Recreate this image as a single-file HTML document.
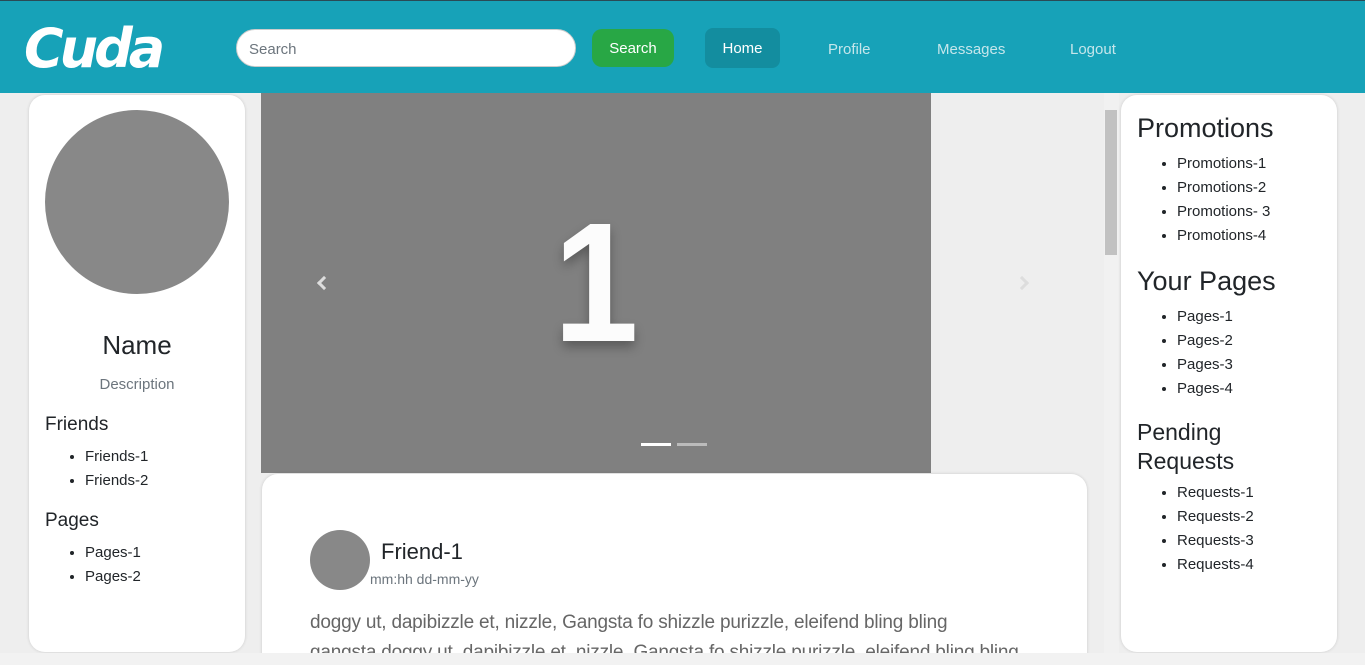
<!DOCTYPE html>
<html><head><style>
*{margin:0;padding:0;box-sizing:border-box}
html,body{width:1365px;height:665px;overflow:hidden}
body{background:#eeeeee;font-family:"Liberation Sans",sans-serif;color:#212529;position:relative}
.nav{position:absolute;left:0;top:0;width:1365px;height:93px;background:#17a2b8;border-top:1px solid #2a4a55}
.logo{position:absolute;left:24px;top:16px;font:italic 900 54px "DejaVu Sans",sans-serif;color:#fff;letter-spacing:-4px}
.search{position:absolute;left:236px;top:28px;width:340px;height:38px;background:#fff;border-radius:19px;border:1px solid #ccc;font-size:15px;color:#6c757d;padding:11px 12px}
.btn{position:absolute;left:592px;top:28px;width:82px;height:38px;background:#28a745;border-radius:10px;color:#fff;font-size:15px;text-align:center;line-height:40px}
.home{position:absolute;left:705px;top:27px;width:75px;height:40px;background:#138d9f;border-radius:8px;color:#fff;font-size:15px;text-align:center;line-height:42px}
.nl{position:absolute;top:40px;color:#c5e6eb;font-size:15px}
.card{position:absolute;background:#fff;border-radius:16px;box-shadow:0 0 3px rgba(0,0,0,.15)}
ul{padding-left:40px;font-size:15px;line-height:24px}
.car{position:absolute;left:261px;top:93px;width:670px;height:380px;background:#808080}
.big{position:absolute;left:0;width:670px;top:190px;text-align:center;color:#fcfcfc;font:bold 170px "Liberation Sans",sans-serif;text-shadow:0 6px 12px rgba(0,0,0,.3);line-height:0;transform:scaleX(.9)}
.bot{position:absolute;left:0;top:653px;width:1365px;height:12px;background:#f2f2f2;z-index:5}
</style></head><body>
<div class="nav">
<div class="logo">Cuda</div>
<div class="search">Search</div>
<div class="btn">Search</div>
<div class="home">Home</div>
<div class="nl" style="left:828px">Profile</div>
<div class="nl" style="left:937px">Messages</div>
<div class="nl" style="left:1070px">Logout</div>
</div>
<div class="card" style="left:29px;top:95px;width:216px;height:557px">
<div style="position:absolute;left:16px;top:15px;width:184px;height:184px;border-radius:50%;background:#888"></div>
<div style="position:absolute;top:235px;width:216px;text-align:center;font-size:26px">Name</div>
<div style="position:absolute;top:281px;width:216px;text-align:center;font-size:15px;color:#6c757d">Description</div>
<div style="position:absolute;left:16px;top:319px;font-size:19px">Friends</div>
<ul style="position:absolute;left:16px;top:350px"><li>Friends-1</li><li>Friends-2</li></ul>
<div style="position:absolute;left:16px;top:415px;font-size:19px">Pages</div>
<ul style="position:absolute;left:16px;top:446px"><li>Pages-1</li><li>Pages-2</li></ul>
</div>
<div class="car"><div class="big">1</div>
<div style="position:absolute;left:58px;top:185px;width:10px;height:10px;border-left:3px solid #ddd;border-bottom:3px solid #ddd;transform:rotate(45deg)"></div>
<div style="position:absolute;left:756px;top:185px;width:10px;height:10px;border-right:3px solid #ddd;border-top:3px solid #ddd;transform:rotate(45deg)"></div>
<div style="position:absolute;left:380px;top:350px;width:30px;height:3px;background:#fff"></div>
<div style="position:absolute;left:416px;top:350px;width:30px;height:3px;background:#bbb"></div>
</div>
<div class="card" style="left:262px;top:474px;width:825px;height:200px;overflow:hidden;border-radius:16px 16px 0 0">
<div style="position:absolute;left:48px;top:56px;width:60px;height:60px;border-radius:50%;background:#888"></div>
<div style="position:absolute;left:119px;top:65px;font-size:22px">Friend-1</div>
<div style="position:absolute;left:108px;top:97px;font-size:14px;color:#6c757d">mm:hh dd-mm-yy</div>
<div style="position:absolute;left:48px;top:134px;width:740px;font-size:19px;line-height:30px;color:#666;white-space:nowrap;letter-spacing:-.2px">doggy ut, dapibizzle et, nizzle, Gangsta fo shizzle purizzle, eleifend bling bling<br>gangsta doggy ut, dapibizzle et, nizzle, Gangsta fo shizzle purizzle, eleifend bling bling</div>
</div>
<div style="position:absolute;left:1104px;top:93px;width:15px;height:560px;background:#f1f1f1"><div style="position:absolute;left:1px;top:17px;width:12px;height:145px;background:#c1c1c1"></div></div>
<div class="card" style="left:1121px;top:95px;width:216px;height:557px">
<div style="position:absolute;left:16px;top:18px;font-size:27px">Promotions</div>
<ul style="position:absolute;left:16px;top:57px"><li>Promotions-1</li><li>Promotions-2</li><li>Promotions- 3</li><li>Promotions-4</li></ul>
<div style="position:absolute;left:16px;top:171px;font-size:27px">Your Pages</div>
<ul style="position:absolute;left:16px;top:210px"><li>Pages-1</li><li>Pages-2</li><li>Pages-3</li><li>Pages-4</li></ul>
<div style="position:absolute;left:16px;top:323px;font-size:23px;line-height:29px">Pending<br>Requests</div>
<ul style="position:absolute;left:16px;top:386px"><li>Requests-1</li><li>Requests-2</li><li>Requests-3</li><li>Requests-4</li></ul>
</div>
<div class="bot"></div>
</body></html>
